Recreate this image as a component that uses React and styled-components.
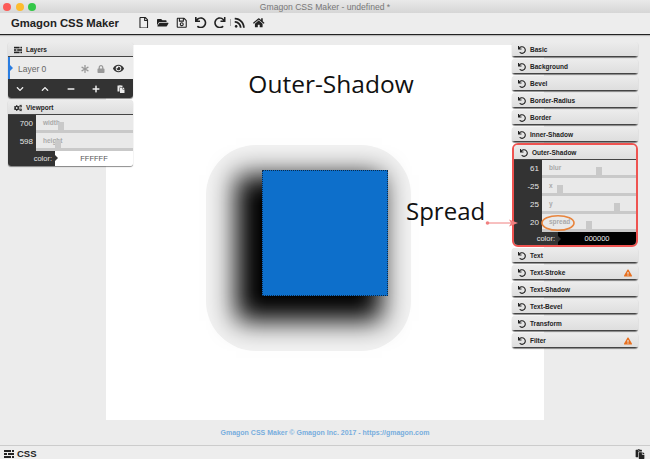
import React from "react";
import styled, { createGlobalStyle } from "styled-components";
import {
  FaRegFile, FaFolderOpen, FaRegSave, FaUndo, FaRedo, FaRss, FaHome, FaCogs,
  FaAsterisk, FaLock, FaEye, FaChevronDown, FaChevronUp, FaMinus, FaPlus, FaPaste,
  FaExclamationTriangle,
} from "react-icons/fa";

const Global = createGlobalStyle`
  html, body { margin: 0; padding: 0; background: #ececec; }
  * { box-sizing: border-box; }
  body { font-family: "Liberation Sans", Arial, sans-serif; }
`;

const Window = styled.div`
  position: relative;
  width: 650px;
  height: 459px;
  overflow: hidden;
  display: flex;
  flex-direction: column;
  background: #ececec;
`;

const TitleBar = styled.div`
  position: relative;
  height: 13px;
  display: flex;
  align-items: center;
  justify-content: center;
  background: linear-gradient(#e9e9e9, #d6d6d6);
  color: #777;
  font-size: 8.6px;
`;

const Lights = styled.div`
  position: absolute;
  left: 3px;
  top: 3px;
  display: flex;
  gap: 4.5px;
`;

const Light = styled.span`
  width: 8px;
  height: 8px;
  border-radius: 50%;
  background: ${(p) => p.$color};
`;

const Toolbar = styled.div`
  height: 22px;
  display: flex;
  align-items: center;
  padding: 0 0 2px 11px;
  background: #ededed;
  border-bottom: 1px solid #222;
  box-shadow: 0 1px 1px #bbb;
`;

const AppName = styled.div`
  width: 123.5px;
  font-size: 11.3px;
  font-weight: bold;
  color: #222;
`;

const ToolIcons = styled.div`
  display: flex;
  align-items: center;
  color: #222;
  font-size: 11.5px;
`;

const ToolSlot = styled.span`
  width: 19px;
  display: flex;
  justify-content: center;
  svg { display: block; }
`;

const ToolSep = styled.span`
  width: 1px;
  height: 7px;
  background: #aaa;
`;

const Workspace = styled.div`
  flex: 1;
  display: flex;
  flex-direction: column;
  align-items: center;
  padding-top: 10px;
`;

const Canvas = styled.div`
  position: relative;
  width: 438px;
  height: 375px;
  background: #fff;
`;

const Heading = styled.div`
  padding: 23px 0 0 12px;
  text-align: center;
  font-family: "Comic Sans MS", "Open Sans", cursive;
  font-size: 24.5px;
  line-height: 32px;
  color: #111;
`;

const ShadowGlow = styled.div`
  position: absolute;
  left: 100px;
  top: 100px;
  width: 205px;
  height: 206px;
  border-radius: 50px;
  background: #f2f2f2;
`;

const ShadowBox = styled.div`
  position: absolute;
  left: 156px;
  top: 125px;
  width: 126px;
  height: 126px;
  background: #0d6fcb;
  border: 1px dotted #0b2a4a;
  box-shadow: -16px 15px 25px 10px #000;
`;

const Footer = styled.div`
  height: 25px;
  display: flex;
  align-items: center;
  color: #78aede;
  font-size: 7px;
  font-weight: bold;
`;

const BottomBar = styled.div`
  height: 14px;
  display: flex;
  align-items: center;
  justify-content: space-between;
  padding: 2px 5px 0 4px;
  background: #ededed;
  border-top: 1px solid #ccc;
  color: #222;
  font-size: 9.5px;
  font-weight: bold;
  svg { display: block; }
`;

const BottomLabel = styled.div`
  display: flex;
  align-items: center;
  gap: 3px;
`;

const Dock = styled.div`
  position: absolute;
  top: 42px;
  width: ${(p) => p.$width}px;
  left: ${(p) => p.$left}px;
  display: flex;
  flex-direction: column;
  gap: 2px;
`;

const Panel = styled.div`
  border-radius: 3px;
  overflow: hidden;
  background: #e6e6e6;
  box-shadow: 0 1px 1px rgba(0, 0, 0, 0.45);
`;

const PanelHeader = styled.div`
  height: 15px;
  display: flex;
  align-items: center;
  gap: 4px;
  padding: 1px 6px 0;
  background: linear-gradient(#ececec, #dedede);
  border-bottom: 1.5px solid #444;
  color: #222;
  font-size: 6.5px;
  font-weight: bold;
  svg { flex: none; }
`;

const Warn = styled(FaExclamationTriangle)`
  margin-left: auto;
  color: #e8701f;
  font-size: 8px;
`;

const LayerRow = styled.div`
  position: relative;
  height: 22px;
  display: flex;
  align-items: center;
  padding: 1px 9px 0 8px;
  border-left: 2px solid #2a7de1;
  background: #ececec;
  color: #666;
  font-size: 8.5px;
  &::before {
    content: "";
    position: absolute;
    left: 0;
    top: 8px;
    border-left: 3px solid #2a7de1;
    border-top: 3px solid transparent;
    border-bottom: 3px solid transparent;
  }
`;

const LayerName = styled.span`
  flex: 1;
`;

const LayerTools = styled.div`
  display: flex;
  align-items: center;
  gap: 8px;
  color: #999;
  font-size: 8px;
  svg:last-child { color: #333; font-size: 11px; }
`;

const ActionBar = styled.div`
  height: 19px;
  display: flex;
  align-items: center;
  justify-content: space-between;
  padding: 0 8px;
  background: #333;
  color: #eee;
  font-size: 8px;
`;

const SliderRow = styled.div`
  display: flex;
  height: 18px;
`;

const SliderValue = styled.div`
  position: relative;
  flex: none;
  width: 28px;
  padding: 4px 3px 0 0;
  background: #333;
  color: #e6e6e6;
  text-align: right;
  font-size: 8px;
  &::after {
    content: "";
    position: absolute;
    right: -3px;
    top: 6px;
    border-left: 3px solid #333;
    border-top: 3px solid transparent;
    border-bottom: 3px solid transparent;
  }
`;

const SliderBody = styled.div`
  position: relative;
  flex: 1;
  padding: 4px 0 0 7px;
  background: #e9e9e9;
  border-bottom: 3px solid #c9c9c9;
  color: #aaa;
  font-size: 6.5px;
  font-weight: bold;
`;

const Thumb = styled.span`
  position: absolute;
  bottom: 0;
  left: ${(p) => p.$left}px;
  width: 6px;
  height: 8px;
  background: #c9c9c9;
`;

const ColorRow = styled.div`
  display: flex;
  height: ${(p) => p.$height}px;
  font-size: 7.5px;
`;

const ColorLabel = styled.div`
  position: relative;
  flex: none;
  width: ${(p) => p.$width}px;
  padding-right: 3px;
  display: flex;
  align-items: center;
  justify-content: flex-end;
  background: #333;
  color: #e6e6e6;
  z-index: 1;
  &::after {
    content: "";
    position: absolute;
    right: -3px;
    top: 4px;
    border-left: 3px solid #333;
    border-top: 3px solid transparent;
    border-bottom: 3px solid transparent;
  }
`;

const ColorValue = styled.div`
  flex: 1;
  display: flex;
  align-items: center;
  justify-content: center;
  background: ${(p) => p.$bg};
  color: ${(p) => p.$fg};
`;

const Highlight = styled.div`
  margin: -1px 0;
  border: 2px solid #ef5350;
  border-radius: 6px;
  overflow: hidden;
`;

const SpreadLabel = styled.div`
  position: absolute;
  left: 406px;
  top: 195px;
  font-family: "Comic Sans MS", "Open Sans", cursive;
  font-size: 24px;
  line-height: 32px;
  color: #111;
`;

const Callout = styled.svg`
  position: absolute;
  left: 480px;
  top: 210px;
`;

// solid block of bars used for the layers and css headings
const BarsIcon = ({ size }) => (
  <svg width={size} height={size} viewBox="0 0 10 10" fill="currentColor">
    <rect x="0" y="1" width="7" height="2" />
    <rect x="8" y="1" width="2" height="2" />
    <rect x="0" y="4" width="3" height="2" />
    <rect x="4" y="4" width="6" height="2" />
    <rect x="0" y="7" width="7" height="2" />
    <rect x="8" y="7" width="2" height="2" />
  </svg>
);

const sliders = [
  { value: 61, label: "blur", left: 54 },
  { value: -25, label: "x", left: 15 },
  { value: 25, label: "y", left: 72 },
  { value: 20, label: "spread", left: 44 },
];

const before = ["Basic", "Background", "Bevel", "Border-Radius", "Border", "Inner-Shadow"];
const after = [
  { name: "Text" },
  { name: "Text-Stroke", warn: true },
  { name: "Text-Shadow" },
  { name: "Text-Bevel" },
  { name: "Transform" },
  { name: "Filter", warn: true },
];

const Slider = ({ value, label, left }) => (
  <SliderRow>
    <SliderValue>{value}</SliderValue>
    <SliderBody>
      {label}
      <Thumb $left={left} />
    </SliderBody>
  </SliderRow>
);

export default function App() {
  return (
    <Window>
      <Global />
      <TitleBar>
        <Lights>
          <Light $color="#fc5b57" />
          <Light $color="#fdbc2e" />
          <Light $color="#33c748" />
        </Lights>
        Gmagon CSS Maker - undefined *
      </TitleBar>
      <Toolbar>
        <AppName>Gmagon CSS Maker</AppName>
        <ToolIcons>
          <ToolSlot><FaRegFile /></ToolSlot>
          <ToolSlot><FaFolderOpen /></ToolSlot>
          <ToolSlot><FaRegSave /></ToolSlot>
          <ToolSlot><FaUndo /></ToolSlot>
          <ToolSlot><FaRedo /></ToolSlot>
          <ToolSep />
          <ToolSlot><FaRss /></ToolSlot>
          <ToolSlot><FaHome /></ToolSlot>
        </ToolIcons>
      </Toolbar>
      <Workspace>
        <Canvas>
          <Heading>Outer-Shadow</Heading>
          <ShadowGlow />
          <ShadowBox />
        </Canvas>
        <Footer>Gmagon CSS Maker © Gmagon Inc. 2017 - https://gmagon.com</Footer>
      </Workspace>
      <BottomBar>
        <BottomLabel><BarsIcon size={10} />CSS</BottomLabel>
        <FaPaste size={10} />
      </BottomBar>

      <Dock $left={8} $width={125}>
        <Panel>
          <PanelHeader><BarsIcon size={8} />Layers</PanelHeader>
          <LayerRow>
            <LayerName>Layer 0</LayerName>
            <LayerTools><FaAsterisk /><FaLock /><FaEye /></LayerTools>
          </LayerRow>
          <ActionBar>
            <FaChevronDown /><FaChevronUp /><FaMinus /><FaPlus /><FaPaste />
          </ActionBar>
        </Panel>
        <Panel>
          <PanelHeader><FaCogs size={8} />Viewport</PanelHeader>
          <Slider value={700} label="width" left={22} />
          <Slider value={598} label="height" left={19} />
          <ColorRow $height={15}>
            <ColorLabel $width={47}>color:</ColorLabel>
            <ColorValue $bg="#fff" $fg="#555">FFFFFF</ColorValue>
          </ColorRow>
        </Panel>
      </Dock>

      <Dock $left={512} $width={126}>
        {before.map((name) => (
          <Panel key={name}><PanelHeader><FaUndo size={8} />{name}</PanelHeader></Panel>
        ))}
        <Highlight>
          <PanelHeader><FaUndo size={8} />Outer-Shadow</PanelHeader>
          {sliders.map((s) => <Slider key={s.label} {...s} />)}
          <ColorRow $height={13}>
            <ColorLabel $width={44}>color:</ColorLabel>
            <ColorValue $bg="#000" $fg="#eee">000000</ColorValue>
          </ColorRow>
        </Highlight>
        {after.map((item) => (
          <Panel key={item.name}>
            <PanelHeader>
              <FaUndo size={8} />{item.name}{item.warn && <Warn />}
            </PanelHeader>
          </Panel>
        ))}
      </Dock>

      <SpreadLabel>Spread</SpreadLabel>
      <Callout width="100" height="24" viewBox="0 0 100 24">
        <circle cx="7.5" cy="13" r="1.8" fill="#f08080" />
        <line x1="8" y1="13" x2="32" y2="13" stroke="#f08080" strokeWidth="1" />
        <polygon points="38,13 29,9.5 31,13 29,16.5" fill="#f08080" />
        <ellipse cx="78" cy="13" rx="16" ry="7.3" fill="none" stroke="#e8843c" strokeWidth="1.6" />
      </Callout>
    </Window>
  );
}
